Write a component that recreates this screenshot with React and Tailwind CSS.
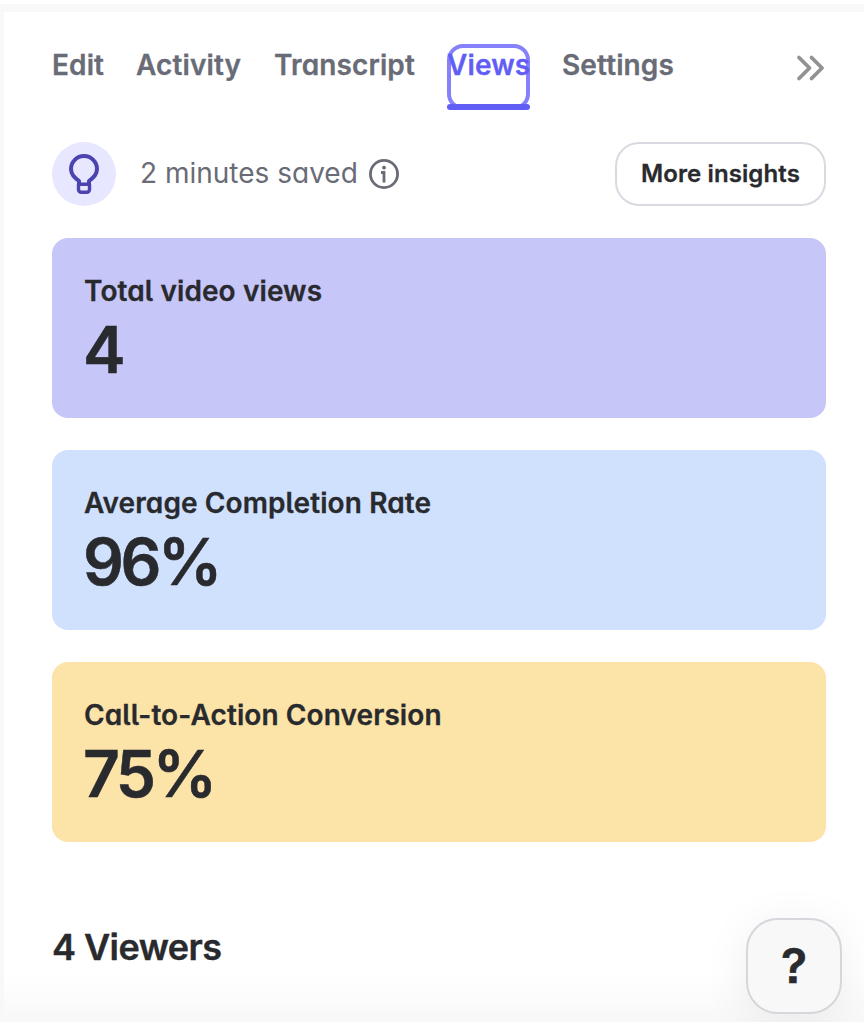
const tabs = [
  { label: 'Edit', box: 'w-[52px]' },
  { label: 'Activity', box: 'w-[106px]' },
  { label: 'Transcript', box: 'w-[141px]' },
  { label: 'Views', box: 'w-[83px]', active: true },
  { label: 'Settings', box: 'w-[113px]' },
];

const stats = [
  { label: 'Total video views', value: '4', color: 'bg-[#c7c6f8]' },
  { label: 'Average Completion Rate', value: '96%', color: 'bg-[#d0e1fe]' },
  { label: 'Call-to-Action Conversion', value: '75%', color: 'bg-[#fce3a7]' },
];

function Tab({ label, box, active }) {
  return (
    <button
      className={`relative flex h-[66px] shrink-0 items-start whitespace-nowrap pt-px text-[28px] leading-10 font-semibold tracking-[0.12px] [-webkit-text-stroke:0.3px_currentColor] ${box} ${
        active ? 'text-[#625df5]' : 'text-[#696b76]'
      }`}
    >
      {active && (
        <span className="absolute inset-x-0 top-0 h-[66px] rounded-2xl border-4 border-[#8581fa]" />
      )}
      <span className="relative">{label}</span>
      {active && <span className="absolute inset-x-0 bottom-0 h-1.5 rounded-full bg-[#625df5]" />}
    </button>
  );
}

function StatCard({ label, value, color }) {
  return (
    <section className={`h-[180px] rounded-2xl px-8 pt-8 text-[#292a2e] ${color}`}>
      <h3 className="text-[28px] leading-[42px] font-semibold tracking-[0.1px] [-webkit-text-stroke:0.3px_currentColor]">{label}</h3>
      <p className="-ml-px text-[64px] leading-[76px] font-semibold tracking-[-3.4px] [-webkit-text-stroke:0.5px_currentColor]">{value}</p>
    </section>
  );
}

export default function App() {
  return (
    <div className="relative flex h-[1022px] w-[864px] flex-col overflow-hidden bg-white pt-1 font-['Inter',sans-serif] [font-feature-settings:'cv05','cv11','ss07']">
      <main className="flex-1 border-t-8 border-l-4 border-[#f8f8f8] bg-white pr-[38px] pl-12">
        <nav className="flex items-start gap-8 pt-8">
          {tabs.map((tab) => (
            <Tab key={tab.label} {...tab} />
          ))}
          <svg className="mt-3 ml-auto h-6 w-7 overflow-visible" viewBox="0 0 28 24" fill="none" stroke="#929292" strokeWidth="3.8" strokeLinecap="round" strokeLinejoin="round">
            <path d="M1 1.500 11.500 12 1 22.500M13.500 1.500 24 12 13.500 22.500" />
          </svg>
        </nav>

        <div className="mt-8 flex h-16 items-center">
          <span className="flex size-16 items-center justify-center rounded-full bg-[#e7e7ff]">
            <svg className="h-10 w-[30px]" viewBox="0 0 30 40" fill="none" stroke="#4b43ae" strokeWidth="4" strokeLinejoin="round">
              <path d="M10 30V27C5.500 23.500 2 20.500 2 15a13 13 0 0 1 26 0c0 5.500-3.500 8.500-8 12v3" />
              <path d="M9.500 30.200h11v5.300a2.800 2.800 0 0 1-2.800 2.800h-5.400a2.800 2.800 0 0 1-2.800-2.800z" strokeWidth="3.400" />
            </svg>
          </span>
          <span className="ml-6 w-[217px] pb-0.5 text-[28px] leading-10 whitespace-nowrap text-[#696b76]">2 minutes saved</span>
          <svg className="ml-3 size-[30px]" viewBox="0 0 30 30" fill="none" stroke="#696b76">
            <circle cx="15" cy="15" r="13.600" strokeWidth="2.800" />
            <circle cx="15" cy="8.700" r="1.900" fill="#696b76" stroke="none" />
            <path d="M12 13.500H15V23.500" strokeWidth="2.800" />
          </svg>
          <button className="ml-auto h-16 w-[211px] rounded-3xl border-2 border-[#dad9e2] text-2xl font-semibold tracking-[0.1px] whitespace-nowrap text-[#292a2e] [-webkit-text-stroke:0.3px_currentColor]">
            More insights
          </button>
        </div>

        <div className="mt-8 flex flex-col gap-8">
          {stats.map((stat) => (
            <StatCard key={stat.label} {...stat} />
          ))}
        </div>

        <h2 className="mt-[81px] text-4xl leading-[48px] font-semibold tracking-[-0.55px] text-[#292a2e] [-webkit-text-stroke:0.4px_currentColor]">4 Viewers</h2>
      </main>

      <div className="absolute right-0 bottom-0 left-1 h-12 bg-linear-to-b from-transparent to-black/[0.028]" />
      <button className="absolute right-[22px] bottom-2 flex size-24 items-center justify-center rounded-[32px] border-2 border-[#d6d6dc] bg-[#f8f8f8] text-5xl font-semibold text-[#292a2e] shadow-[0_8px_48px_rgba(0,0,0,0.07)] [-webkit-text-stroke:0.6px_currentColor]">
        ?
      </button>
    </div>
  );
}
